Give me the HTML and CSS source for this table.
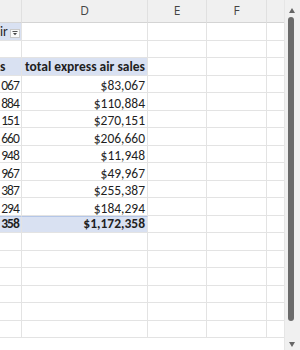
FILE: index.html
```html
<!DOCTYPE html>
<html>
<head>
<meta charset="utf-8">
<link rel="stylesheet" href="styles.css">
</head>
<body>
<div class="window">
  <div class="sheet">
    <div class="row head">
      <div class="cell c"></div>
      <div class="cell d">D</div>
      <div class="cell e">E</div>
      <div class="cell f">F</div>
      <div class="cell g"></div>
    </div>
    <div class="row">
      <div class="cell c blue filter"><span>ir</span><span class="fbtn"><svg width="8" height="8" viewBox="0 0 8 8"><path d="M1.5 2.5h5" stroke="#555" stroke-width="1"/><path d="M2 4h4l-2 2.3z" fill="#444"/></svg></span></div>
      <div class="cell d"></div><div class="cell e"></div><div class="cell f"></div><div class="cell g"></div>
    </div>
    <div class="row">
      <div class="cell c"></div><div class="cell d"></div><div class="cell e"></div><div class="cell f"></div><div class="cell g"></div>
    </div>
    <div class="row bold hdr">
      <div class="cell c blue lbl">s</div>
      <div class="cell d blue num">total express air sales</div>
      <div class="cell e"></div><div class="cell f"></div><div class="cell g"></div>
    </div>
    <div class="row"><div class="cell c num">067</div><div class="cell d num">$83,067</div><div class="cell e"></div><div class="cell f"></div><div class="cell g"></div></div>
    <div class="row"><div class="cell c num">884</div><div class="cell d num">$110,884</div><div class="cell e"></div><div class="cell f"></div><div class="cell g"></div></div>
    <div class="row"><div class="cell c num">151</div><div class="cell d num">$270,151</div><div class="cell e"></div><div class="cell f"></div><div class="cell g"></div></div>
    <div class="row"><div class="cell c num">660</div><div class="cell d num">$206,660</div><div class="cell e"></div><div class="cell f"></div><div class="cell g"></div></div>
    <div class="row"><div class="cell c num">948</div><div class="cell d num">$11,948</div><div class="cell e"></div><div class="cell f"></div><div class="cell g"></div></div>
    <div class="row"><div class="cell c num">967</div><div class="cell d num">$49,967</div><div class="cell e"></div><div class="cell f"></div><div class="cell g"></div></div>
    <div class="row"><div class="cell c num">387</div><div class="cell d num">$255,387</div><div class="cell e"></div><div class="cell f"></div><div class="cell g"></div></div>
    <div class="row"><div class="cell c num">294</div><div class="cell d num">$184,294</div><div class="cell e"></div><div class="cell f"></div><div class="cell g"></div></div>
    <div class="row bold total">
      <div class="cell c blue num">358</div>
      <div class="cell d blue num">$1,172,358</div>
      <div class="cell e"></div><div class="cell f"></div><div class="cell g"></div>
    </div>
    <div class="row"><div class="cell c"></div><div class="cell d"></div><div class="cell e"></div><div class="cell f"></div><div class="cell g"></div></div>
    <div class="row"><div class="cell c"></div><div class="cell d"></div><div class="cell e"></div><div class="cell f"></div><div class="cell g"></div></div>
    <div class="row"><div class="cell c"></div><div class="cell d"></div><div class="cell e"></div><div class="cell f"></div><div class="cell g"></div></div>
    <div class="row"><div class="cell c"></div><div class="cell d"></div><div class="cell e"></div><div class="cell f"></div><div class="cell g"></div></div>
    <div class="row"><div class="cell c"></div><div class="cell d"></div><div class="cell e"></div><div class="cell f"></div><div class="cell g"></div></div>
    <div class="row"><div class="cell c"></div><div class="cell d"></div><div class="cell e"></div><div class="cell f"></div><div class="cell g"></div></div>
  </div>
  <div class="scrollbar">
    <div class="arrow up"></div>
    <div class="thumb"></div>
    <div class="arrow down"></div>
  </div>
</div>
</body>
</html>
```
FILE: styles.css
```css
* { box-sizing: border-box; }
html, body { margin: 0; padding: 0; background: #fff; }
body { width: 300px; height: 350px; overflow: hidden; }
.window { display: flex; width: 300px; height: 350px; }
.sheet { width: 284px; height: 350px; overflow: hidden; font-family: Carlito, Lato, "Liberation Sans", sans-serif; font-size: 13.5px; line-height: 12px; color: #1f1f1f; }
.row { display: grid; grid-template-columns: 22px 126px 59px 60px 17px; height: 17.5px; }
.row.head { height: 23px; background: #f0f0f0; color: #444; font-family: "Open Sans", sans-serif; font-size: 12px; line-height: 16px; }
.cell { border-right: 1px solid #e3e3e3; border-bottom: 1px solid #e3e3e3; display: flex; align-items: flex-end; white-space: nowrap; padding-bottom: 0; }
.head .cell { justify-content: center; align-items: center; border-right-color: #e0e0e0; border-bottom: 1px solid #d4d4d4; }
.cell.g { border-right: none; }
.num { justify-content: flex-end; padding-right: 2px; }
.c.num { letter-spacing: -0.9px; padding-right: 2px; }
.lbl { justify-content: flex-start; padding-left: 0; }
.bold { font-weight: 700; }
.hdr .cell, .total .cell { padding-bottom: 2px; }
.blue { background: #d9e1f2; }
.total .cell.blue { border-top: 1px solid #b4c6e7; }
.filter { justify-content: flex-start; align-items: flex-end; padding-left: 0; padding-bottom: 2px; }
.fbtn { flex: none; width: 10px; height: 9px; margin-left: 2px; background: #fafafa; border: 1px solid #c9c9c9; display: flex; align-items: center; justify-content: center; }
.fbtn svg { display: block; }
.scrollbar { width: 16px; height: 350px; background: #f0f0f0; border-left: 1px solid #e6e6e6; display: flex; flex-direction: column; padding: 8px 0 2px 3px; align-items: flex-start; }
.arrow { width: 0; height: 0; border-left: 3.5px solid transparent; border-right: 3.5px solid transparent; margin-left: 1px; }
.arrow.up { border-bottom: 5px solid #666; }
.arrow.down { border-top: 5px solid #666; margin-top: auto; margin-bottom: 1px; }
.thumb { width: 6px; height: 304px; margin-top: 4px; background: #6b6b6b; border-radius: 3px; }
```
